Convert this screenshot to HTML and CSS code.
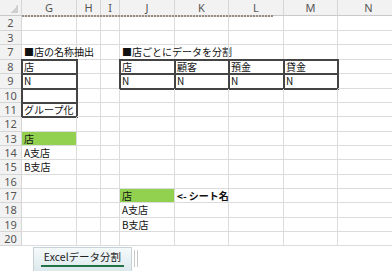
FILE: index.html
```html
<!DOCTYPE html>
<html lang="ja">
<head>
  <meta charset="UTF-8">
  <title>Excelデータ分割</title>
  <link rel="stylesheet" href="styles.css">
</head>
<body>
  <div class="sheet">
    <div class="row colhead">
      <div class="c hdr corner"><span class="tri"></span></div>
      <div class="c g">G</div><div class="c h">H</div><div class="c i">I</div><div class="c j">J</div>
      <div class="c k">K</div><div class="c l">L</div><div class="c m">M</div><div class="c n">N</div>
    </div>

    <div class="row h15">
      <div class="c hdr">2</div>
      <div class="c g"></div><div class="c h"></div><div class="c i"></div><div class="c j"></div>
      <div class="c k"></div><div class="c l"></div><div class="c m"></div><div class="c n"></div>
    </div>
    <div class="row h14">
      <div class="c hdr">3</div>
      <div class="c g"></div><div class="c h"></div><div class="c i"></div><div class="c j"></div>
      <div class="c k"></div><div class="c l"></div><div class="c m"></div><div class="c n"></div>
    </div>
    <div class="row h15">
      <div class="c hdr">7</div>
      <div class="c g">■店の名称抽出</div><div class="c h"></div><div class="c i"></div><div class="c j">■店ごとにデータを分割</div>
      <div class="c k"></div><div class="c l"></div><div class="c m"></div><div class="c n"></div>
    </div>
    <div class="row h14">
      <div class="c hdr">8</div>
      <div class="c g bx">店</div><div class="c h"></div><div class="c i"></div><div class="c j bx">店</div>
      <div class="c k bx">顧客</div><div class="c l bx">預金</div><div class="c m bx">貸金</div><div class="c n"></div>
    </div>
    <div class="row h15">
      <div class="c hdr">9</div>
      <div class="c g bx">N</div><div class="c h"></div><div class="c i"></div><div class="c j bx">N</div>
      <div class="c k bx">N</div><div class="c l bx">N</div><div class="c m bx">N</div><div class="c n"></div>
    </div>
    <div class="row h14">
      <div class="c hdr">10</div>
      <div class="c g bx"></div><div class="c h"></div><div class="c i"></div><div class="c j"></div>
      <div class="c k"></div><div class="c l"></div><div class="c m"></div><div class="c n"></div>
    </div>
    <div class="row h14">
      <div class="c hdr">11</div>
      <div class="c g bx">グループ化</div><div class="c h"></div><div class="c i"></div><div class="c j"></div>
      <div class="c k"></div><div class="c l"></div><div class="c m"></div><div class="c n"></div>
    </div>
    <div class="row h15">
      <div class="c hdr">12</div>
      <div class="c g"></div><div class="c h"></div><div class="c i"></div><div class="c j"></div>
      <div class="c k"></div><div class="c l"></div><div class="c m"></div><div class="c n"></div>
    </div>
    <div class="row h14">
      <div class="c hdr">13</div>
      <div class="c g green">店</div><div class="c h"></div><div class="c i"></div><div class="c j"></div>
      <div class="c k"></div><div class="c l"></div><div class="c m"></div><div class="c n"></div>
    </div>
    <div class="row h14">
      <div class="c hdr">14</div>
      <div class="c g">A支店</div><div class="c h"></div><div class="c i"></div><div class="c j"></div>
      <div class="c k"></div><div class="c l"></div><div class="c m"></div><div class="c n"></div>
    </div>
    <div class="row h15">
      <div class="c hdr">15</div>
      <div class="c g">B支店</div><div class="c h"></div><div class="c i"></div><div class="c j"></div>
      <div class="c k"></div><div class="c l"></div><div class="c m"></div><div class="c n"></div>
    </div>
    <div class="row h14">
      <div class="c hdr">16</div>
      <div class="c g"></div><div class="c h"></div><div class="c i"></div><div class="c j"></div>
      <div class="c k"></div><div class="c l"></div><div class="c m"></div><div class="c n"></div>
    </div>
    <div class="row h14">
      <div class="c hdr">17</div>
      <div class="c g"></div><div class="c h"></div><div class="c i"></div><div class="c j green">店</div>
      <div class="c k bold">&lt;- シート名</div><div class="c l"></div><div class="c m"></div><div class="c n"></div>
    </div>
    <div class="row h15">
      <div class="c hdr">18</div>
      <div class="c g"></div><div class="c h"></div><div class="c i"></div><div class="c j">A支店</div>
      <div class="c k"></div><div class="c l"></div><div class="c m"></div><div class="c n"></div>
    </div>
    <div class="row h14">
      <div class="c hdr">19</div>
      <div class="c g"></div><div class="c h"></div><div class="c i"></div><div class="c j">B支店</div>
      <div class="c k"></div><div class="c l"></div><div class="c m"></div><div class="c n"></div>
    </div>
    <div class="row h14">
      <div class="c hdr">20</div>
      <div class="c g"></div><div class="c h"></div><div class="c i"></div><div class="c j"></div>
      <div class="c k"></div><div class="c l"></div><div class="c m"></div><div class="c n"></div>
    </div>

    <div class="page-break"></div>
  </div>

  <div class="tabbar">
    <div class="tab"><span class="tab-label">Excelデータ分割</span></div>
    <div class="tab-sep"></div>
  </div>
</body>
</html>
```

FILE: styles.css
```css
body {
  margin: 0;
  width: 392px;
  height: 271px;
  overflow: hidden;
  background: #fff;
  font-family: "Noto Sans CJK JP", "Noto Sans", sans-serif;
  color: #111;
}
.sheet {
  position: relative;
  height: 246px;
  overflow: hidden;
}
.row {
  display: flex;
  width: 400px;
}
.colhead { height: 16px; }
.h14 { height: 14px; }
.h15 { height: 15px; }

.c {
  box-sizing: border-box;
  flex: none;
  height: 100%;
  display: flex;
  align-items: center;
  padding-left: 2px;
  border-right: 1px solid #dcdcdc;
  border-bottom: 1px solid #dcdcdc;
  font-size: 10px;
  line-height: 12px;
  white-space: nowrap;
}
.hdr { width: 22px; }
.g { width: 55px; }
.h { width: 24px; }
.i { width: 19px; }
.j { width: 55px; }
.k { width: 54px; }
.l { width: 55px; }
.m { width: 54px; }
.n { width: 62px; }

/* headers */
.colhead .c,
.c.hdr {
  justify-content: center;
  padding-left: 0;
  background: #f2f2f2;
  color: #555;
  font-family: "Noto Sans", sans-serif;
  font-size: 11px;
  border-color: #d6d6d6;
}
.colhead .c {
  border-bottom-color: #c8c8c8;
}
.corner.c {
  justify-content: flex-end;
  align-items: flex-end;
}
.tri {
  width: 8px;
  height: 8px;
  margin: 0 3px 2px 0;
  background: linear-gradient(135deg, transparent 50%, #cfcfcf 50%);
}

/* cell formats */
.bx {
  border-right-color: #444;
  border-bottom-color: #444;
  box-shadow: 0 0 0 1px #444, inset 1px 1px 0 #444;
}
.green {
  background: #92d050;
}
.bold {
  font-weight: bold;
}

.page-break {
  position: absolute;
  left: 22px;
  top: 15px;
  width: 251px;
  height: 2px;
  background: repeating-linear-gradient(90deg, #9a8f86 0 2px, #d8d2cc 2px 3px);
}

/* sheet tabs */
.tabbar {
  display: flex;
  align-items: flex-start;
  height: 25px;
  padding-left: 33px;
}
.tab {
  width: 97px;
  height: 24px;
  margin-top: 1px;
  border: 1px solid #c6d2d6;
  border-bottom: none;
  background: linear-gradient(#f5fafb, #dbe8ec);
  display: flex;
  justify-content: center;
  align-items: flex-start;
}
.tab-label {
  margin-top: 2px;
  padding: 0 3px 1px;
  font-size: 10.5px;
  line-height: 14px;
  color: #222;
  border-bottom: 2px solid #217346;
}
.tab-sep {
  width: 2px;
  height: 17px;
  margin: 4px 0 0 2px;
  border-left: 1px solid #c8c8c8;
  border-right: 1px solid #c8c8c8;
}
```
